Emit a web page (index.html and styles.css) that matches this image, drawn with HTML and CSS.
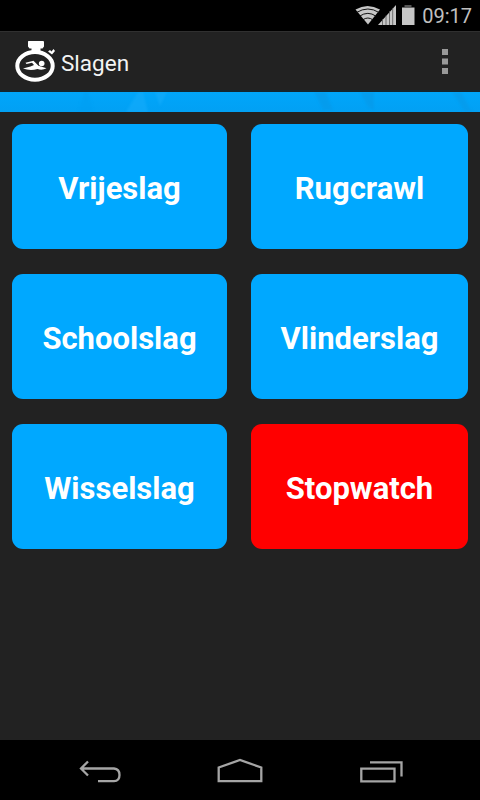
FILE: index.html
```html
<!DOCTYPE html>
<html lang="nl">
<head>
<meta charset="utf-8">
<title>Slagen</title>
<link rel="stylesheet" href="styles.css">
</head>
<body>
<div class="screen">
  <div class="status">
    <svg class="status-icons" width="62" height="30" viewBox="0 0 62 30">
      <path d="M2.500 9.500Q14.500 2.500 27 9.500L15 24.500Z" fill="#c6c6c6"/>
      <path d="M3.500 12.500Q15 5.500 26 12.500M6.500 16.200Q15 10.500 23 16.200M9.500 20Q15 16 20 20" fill="none" stroke="#111" stroke-width="1"/>
      <path d="M25 25L43 5V25Z" fill="#c6c6c6"/>
      <path d="M29.500 19V25M33 15.500V25M36.500 11V25M39.700 8V25" stroke="#555" stroke-width=".8"/>
      <path d="M51.500 5H58.500V7H51.500Z" fill="#555"/>
      <path d="M49 7.500H61.500V25H49Z" fill="#c6c6c6"/>
    </svg>
    <span class="time">09:17</span>
  </div>
  <header class="bar">
    <svg class="logo" width="42" height="44" viewBox="14 39 42 44">
      <path d="M28.500 41H43Q44 41 44 42V46.500L42.500 48.500H40.500V51H31.500V48.500H29.500L28 46.500V42Q28 41 28.500 41Z" fill="#fff"/>
      <ellipse cx="35" cy="65.900" rx="17.700" ry="13.800" fill="none" stroke="#fff" stroke-width="4"/>
      <path d="M48 51.500L50 50L51.500 51.500L53.500 49L55 51L52 54.500Z" fill="#fff"/>
      <circle cx="41.700" cy="63.500" r="2.800" fill="#fff"/>
      <path d="M25.500 62.800L33.500 60.700L38.500 65.800L46.500 68.300Q42 70.800 37.500 69Q30 71 23 68.500L30.500 66.500L34 65L32 62.800L26.500 64Z" fill="#fff"/>
    </svg>
    <h1 class="title">Slagen</h1>
    <svg class="overflow" width="6" height="26" viewBox="0 0 6 26"><path d="M0 0H6V6H0ZM0 9.500H6V15.500H0ZM0 19H6V25H0Z" fill="#999"/></svg>
  </header>
  <svg class="banner" width="480" height="20" viewBox="0 0 480 20">
    <g class="ripples">
      <path d="M138 0L126 20H148L143 0ZM155 0L160 14L167 0Z" fill="#15acfb"/>
      <path d="M314 0L323 18H333L326 0Z" fill="#0799e8"/>
      <path d="M360 0L368 15L374 18V0Z" fill="#0799e8"/>
      <path d="M452 0L465 20H472L461 0Z" fill="#0799e8"/>
      <path d="M84 0L78 20H94L88 0Z" fill="#009ff3"/>
    </g>
  </svg>
  <main class="grid">
    <button class="tile">Vrijeslag</button>
    <button class="tile">Rugcrawl</button>
    <button class="tile">Schoolslag</button>
    <button class="tile">Vlinderslag</button>
    <button class="tile">Wisselslag</button>
    <button class="tile stop">Stopwatch</button>
  </main>
  <nav class="nav">
    <svg width="480" height="60" viewBox="0 740 480 60" fill="none" stroke="#a5a5a5" stroke-width="2.300">
      <path d="M81 768.500H114Q119.500 769 119.500 775T114 781.200H98M88 761.500L81 768.500L88 775.500"/>
      <path d="M218.700 781.200V767.500L240 760L261.300 767.500V781.200Z"/>
      <path d="M361.300 768.600H394.500V781.300H361.300ZM370 762.300H401.500V776.500"/>
    </svg>
  </nav>
</div>
</body>
</html>
```
FILE: styles.css
```css
* {
  box-sizing: border-box;
}

body {
  margin: 0;
  background: #000;
  font-family: Roboto, "Liberation Sans", sans-serif;
}

.screen {
  display: flex;
  flex-direction: column;
  width: 480px;
  height: 800px;
  background: #222;
  overflow: hidden;
}

.status {
  display: flex;
  flex: none;
  justify-content: flex-end;
  height: 31px;
  padding-right: 8px;
  background: #000;
}

.status-icons {
  margin-right: 7px;
}

.time {
  color: #c0c0c0;
  font-size: 20px;
  line-height: 32px;
}

.bar {
  display: flex;
  flex: none;
  align-items: center;
  height: 61px;
  padding: 0 32px 0 14px;
  border-top: 1px solid #303030;
  border-bottom: 2px solid #14262f;
}

.title {
  flex: 1;
  margin: 0 0 0 5px;
  padding-top: 3px;
  color: #f3f3f3;
  font-size: 22.5px;
  font-weight: 400;
  line-height: 30px;
}

.overflow {
  margin-top: 2px;
}

.banner {
  flex: none;
  background: linear-gradient(#00a6fb, #02a0f3);
}

.ripples {
  opacity: 0.6;
  filter: blur(1px);
}

.grid {
  display: grid;
  flex: 1;
  grid-template-columns: 215px 217px;
  grid-auto-rows: 125px;
  gap: 25px 24px;
  padding: 12px;
}

.tile {
  padding: 4px 0 0;
  border: 0;
  border-radius: 11px;
  background: #00a8ff;
  color: #fff;
  font: 700 31px Roboto, "Liberation Sans", sans-serif;
}

.stop {
  background: #f00;
}

.nav {
  flex: none;
  height: 60px;
  background: #000;
}
```
